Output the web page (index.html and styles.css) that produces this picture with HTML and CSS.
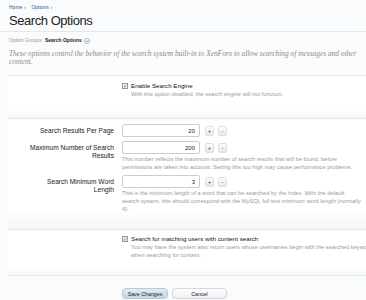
FILE: index.html
```html
<!DOCTYPE html>
<html lang="en">
<head>
    <meta charset="UTF-8">
    <meta name="viewport" content="width=device-width, initial-scale=1.0">
    <title>Search Options</title>
    <link rel="stylesheet" href="styles.css">
</head>
<body>
    <div class="page">
        <div class="title-bar">
            <nav class="breadcrumb">
                <a href="#">Home</a><span class="sep">&rsaquo;</span>
                <a href="#">Options</a><span class="sep">&rsaquo;</span>
            </nav>
            <h1>Search Options</h1>
        </div>

        <div class="group-picker">
            Option Groups: <strong>Search Options</strong>
            <span class="group-toggle">
                <svg viewBox="0 0 8 8" width="6" height="6">
                    <circle cx="4" cy="4" r="3.4" fill="#fff" stroke="#8a8a8a" stroke-width="0.8"></circle>
                    <path d="M2.4 3.3 L4 5 L5.6 3.3" fill="none" stroke="#555" stroke-width="0.9"></path>
                </svg>
            </span>
        </div>

        <p class="intro">These options control the behavior of the search system built-in to XenForo to allow searching of messages and other content.</p>

        <form class="options-form">
            <div class="form-section first">
                <div class="ctrl-unit">
                    <div class="ctrl-label"></div>
                    <div class="ctrl-field">
                        <label class="check"><span class="box">&#10003;</span>Enable Search Engine</label>
                        <p class="explain">With this option disabled, the search engine will not function.</p>
                    </div>
                </div>
            </div>

            <div class="form-section numbers">
                <div class="ctrl-unit">
                    <div class="ctrl-label">Search Results Per Page</div>
                    <div class="ctrl-field">
                        <div class="spin">
                            <input type="text" value="20">
                            <button type="button">+</button>
                            <button type="button">-</button>
                        </div>
                    </div>
                </div>

                <div class="ctrl-unit">
                    <div class="ctrl-label">Maximum Number of Search Results</div>
                    <div class="ctrl-field">
                        <div class="spin">
                            <input type="text" value="200">
                            <button type="button">+</button>
                            <button type="button">-</button>
                        </div>
                        <p class="explain">This number reflects the maximum number of search results that will be found, before<br>permissions are taken into account. Setting this too high may cause performance problems.</p>
                    </div>
                </div>

                <div class="ctrl-unit">
                    <div class="ctrl-label">Search Minimum Word Length</div>
                    <div class="ctrl-field">
                        <div class="spin">
                            <input type="text" value="3">
                            <button type="button">+</button>
                            <button type="button">-</button>
                        </div>
                        <p class="explain">This is the minimum length of a word that can be searched by the index. With the default<br>search system, this should correspond with the MySQL full text minimum word length (normally<br>4).</p>
                    </div>
                </div>
            </div>

            <div class="form-section last">
                <div class="ctrl-unit">
                    <div class="ctrl-label"></div>
                    <div class="ctrl-field">
                        <label class="check"><span class="box">&#10003;</span>Search for matching users with content search</label>
                        <p class="explain">You may have the system also return users whose usernames begin with the searched keywords<br>when searching for content.</p>
                    </div>
                </div>
            </div>

            <div class="submit-row">
                <button type="submit" class="btn primary">Save Changes</button>
                <button type="button" class="btn">Cancel</button>
            </div>
        </form>
    </div>
</body>
</html>
```

FILE: styles.css
```css
:root {
    --link-color: #2f5597;
    --text-color: #1a1a1a;
    --muted: #9a9a9a;
    --line: #e1e9ee;
    --bg: #fafbfc;
    --label-width: 114px;
}

* {
    margin: 0;
    padding: 0;
    box-sizing: border-box;
}

body {
    font-family: "Liberation Sans", Arial, sans-serif;
    background-color: var(--bg);
    color: var(--text-color);
    overflow: hidden;
}

.page {
    width: 366px;
}

.title-bar {
    padding: 4px 9px 2px;
    border-bottom: 1px solid var(--line);
    height: 32px;
}

.breadcrumb {
    font-size: 5px;
    line-height: 6px;
}

.breadcrumb a {
    color: var(--link-color);
    text-decoration: none;
}

.breadcrumb .sep {
    margin: 0 4px 0 2px;
    color: #666;
}

h1 {
    font-size: 13px;
    font-weight: normal;
    letter-spacing: -0.45px;
    line-height: 16px;
    margin-top: 3px;
    color: #222;
}

.group-picker {
    font-size: 5px;
    color: var(--muted);
    padding: 5px 9px 0;
    line-height: 7px;
    display: flex;
    align-items: center;
    gap: 2px;
}

.group-picker strong {
    color: #222;
    font-weight: bold;
}

.group-toggle {
    display: flex;
}

.intro {
    font-family: "Liberation Serif", "Times New Roman", serif;
    font-style: italic;
    font-size: 7.4px;
    line-height: 8px;
    color: #8c8c8c;
    padding: 6px 8px 0 9px;
    height: 31px;
}

.options-form {
    margin-left: 8px;
}

.form-section {
    border-top: 1px solid var(--line);
    background: linear-gradient(to bottom, #ffffff 80%, #f5f6f7);
}

.form-section.first {
    height: 43px;
    padding-top: 6px;
}

.form-section.numbers {
    height: 111px;
    padding-top: 5px;
}

.form-section.last {
    height: 46px;
    padding-top: 5px;
}

.ctrl-unit {
    display: flex;
    margin-bottom: 4px;
}

.ctrl-label {
    width: calc(var(--label-width) - 8px);
    padding-left: 20px;
    text-align: right;
    font-size: 6.6px;
    line-height: 8px;
    padding-top: 3px;
    color: #222;
}

.ctrl-field {
    margin-left: 8px;
    flex: 1;
    min-width: 0;
}

.check {
    display: flex;
    align-items: center;
    font-size: 6.2px;
    line-height: 8px;
    color: #111;
    white-space: nowrap;
}

.check .box {
    width: 6px;
    height: 6px;
    border: 1px solid #8f9aa5;
    background: #eef2f6;
    color: #3b4a5a;
    font-size: 5px;
    line-height: 4px;
    text-align: center;
    margin-right: 3px;
    display: inline-block;
}

.explain {
    font-size: 5.7px;
    line-height: 8px;
    color: var(--muted);
    margin-top: 1px;
    white-space: nowrap;
}

.check + .explain {
    padding-left: 9px;
    margin-top: 0;
}

.spin {
    display: flex;
    align-items: center;
    gap: 4px;
    height: 13px;
}

.spin input {
    width: 78px;
    height: 13px;
    border: 1px solid #c9cdd2;
    border-radius: 2px;
    background: #fff;
    text-align: right;
    font-family: inherit;
    font-size: 6px;
    padding: 0 4px;
    color: #222;
    margin-right: 1px;
}

.spin button {
    width: 9px;
    height: 10px;
    border: 1px solid #dcdfe3;
    border-radius: 2px;
    background: linear-gradient(to bottom, #fbfbfb, #e6e8eb);
    font-size: 5px;
    color: #333;
    font-family: inherit;
    line-height: 8px;
}

.submit-row {
    border-top: 1px solid var(--line);
    padding-top: 12px;
    padding-left: var(--label-width);
    display: flex;
    gap: 4px;
}

.btn {
    height: 11px;
    width: 55px;
    border: 1px solid #d4d8dd;
    border-radius: 4px;
    background: linear-gradient(to bottom, #ffffff, #eceef1);
    font-family: inherit;
    font-size: 5.3px;
    color: #222;
    box-shadow: 0 1px 1px rgba(0, 0, 0, 0.08);
}

.btn.primary {
    width: 46px;
    background: linear-gradient(to bottom, #e2ebf5, #c3d5e9);
    border-color: #b9cade;
}
```
